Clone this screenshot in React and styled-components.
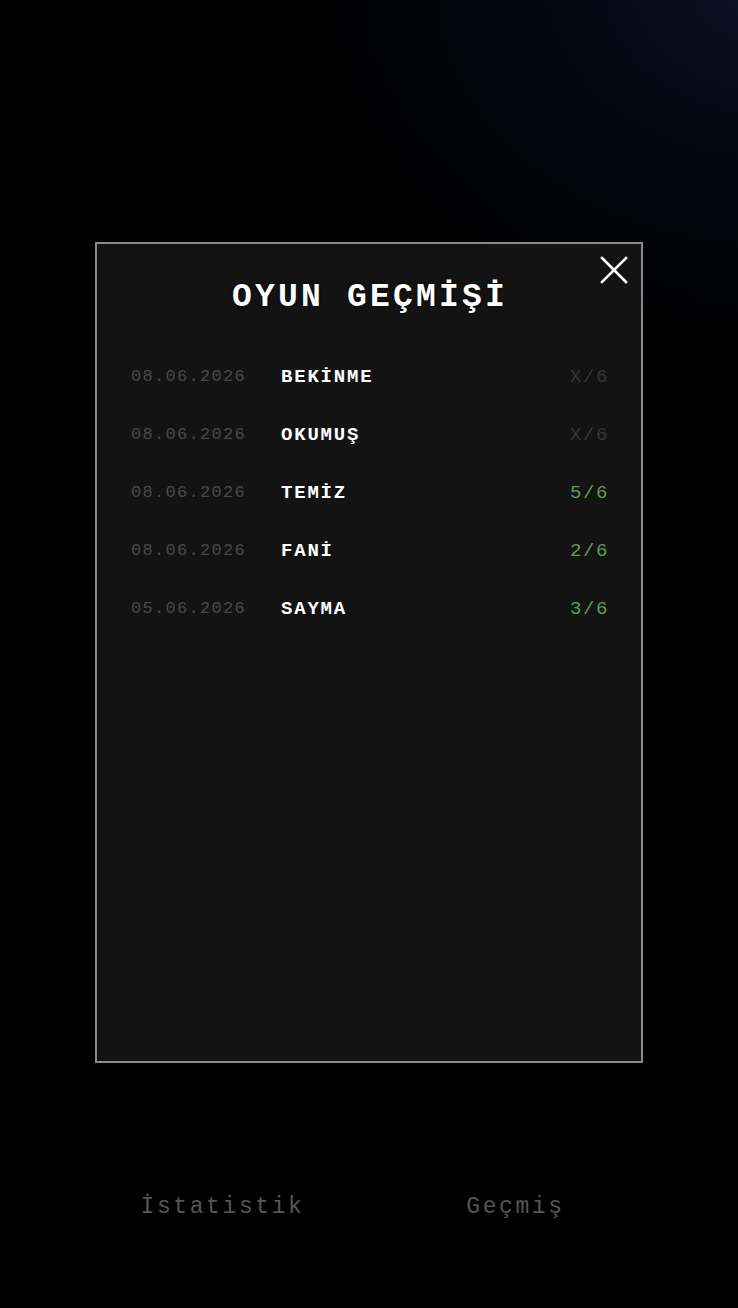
import React from 'react';
import styled, { createGlobalStyle } from 'styled-components';

const GlobalStyle = createGlobalStyle`
  html, body {
    margin: 0;
    padding: 0;
    background: #000;
  }
  * {
    box-sizing: border-box;
  }
`;

const Screen = styled.div`
  min-height: 1308px;
  width: 100%;
  overflow: hidden;
  background:
    radial-gradient(ellipse 480px 380px at 770px -20px, rgba(14, 22, 46, 0.9) 0%, rgba(7, 11, 24, 0.55) 50%, rgba(0, 0, 0, 0) 100%),
    #000;
  font-family: "Liberation Mono", "DejaVu Sans Mono", monospace;
  display: flex;
  flex-direction: column;
  align-items: center;
  padding-top: 242px;
`;

const Modal = styled.div`
  position: relative;
  width: 548px;
  height: 821px;
  background: #131313;
  border: 2px solid #8a8a8a;
  padding: 34px 32px 0 34px;
  display: flex;
  flex-direction: column;
`;

const CloseButton = styled.button`
  position: absolute;
  top: 11px;
  right: 12px;
  width: 30px;
  height: 30px;
  padding: 0;
  border: none;
  background: transparent;
  cursor: pointer;
  display: flex;
  align-items: center;
  justify-content: center;
`;

const Title = styled.h2`
  margin: 0 0 30px;
  text-align: center;
  color: #fff;
  font-size: 33px;
  font-weight: 700;
  letter-spacing: 3.2px;
  line-height: 40px;
  text-shadow: 0 0 3px #000;
`;

const List = styled.div`
  display: flex;
  flex-direction: column;
`;

const Row = styled.div`
  height: 58px;
  display: flex;
  align-items: center;
`;

const DateCell = styled.span`
  width: 150px;
  flex-shrink: 0;
  color: #494949;
  font-size: 17px;
  letter-spacing: 1.3px;
  margin-top: -2px;
`;

const Word = styled.span`
  flex: 1;
  color: #fff;
  font-size: 19px;
  font-weight: 700;
  letter-spacing: 1.8px;
`;

const Score = styled.span`
  color: ${p => (p.$won ? '#5f9c52' : '#363636')};
  font-size: 19px;
  letter-spacing: 1.6px;
`;

const Nav = styled.nav`
  width: 586px;
  margin-top: 129px;
  display: flex;
`;

const NavItem = styled.button`
  flex: 1;
  background: transparent;
  border: none;
  padding: 0;
  color: #555;
  font-family: "Liberation Mono", "DejaVu Sans Mono", monospace;
  font-size: 23px;
  letter-spacing: 2.6px;
  line-height: 30px;
  text-align: center;
  cursor: pointer;
`;

const games = [
  { date: '08.06.2026', word: 'BEKİNME', score: 'X/6', won: false },
  { date: '08.06.2026', word: 'OKUMUŞ', score: 'X/6', won: false },
  { date: '08.06.2026', word: 'TEMİZ', score: '5/6', won: true },
  { date: '08.06.2026', word: 'FANİ', score: '2/6', won: true },
  { date: '05.06.2026', word: 'SAYMA', score: '3/6', won: true },
];

const CloseIcon = () => (
  <svg width="28" height="28" viewBox="0 0 28 28" fill="none">
    <path d="M2 2 L26 26 M26 2 L2 26" stroke="#fff" strokeWidth="2.6" strokeLinecap="square" />
  </svg>
);

const App = () => (
  <>
    <GlobalStyle />
    <Screen>
      <Modal>
        <CloseButton aria-label="Kapat">
          <CloseIcon />
        </CloseButton>
        <Title>OYUN GEÇMİŞİ</Title>
        <List>
          {games.map((g, i) => (
            <Row key={i}>
              <DateCell>{g.date}</DateCell>
              <Word>{g.word}</Word>
              <Score $won={g.won}>{g.score}</Score>
            </Row>
          ))}
        </List>
      </Modal>
      <Nav>
        <NavItem>İstatistik</NavItem>
        <NavItem>Geçmiş</NavItem>
      </Nav>
    </Screen>
  </>
);

export default App;
